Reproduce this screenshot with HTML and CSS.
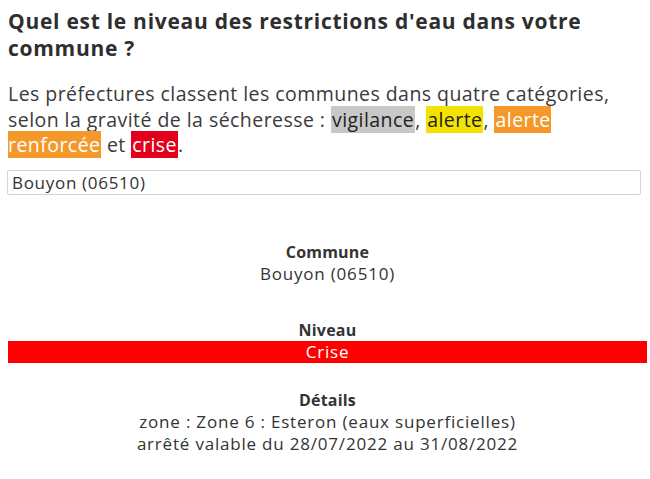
FILE: index.html
```html
<!DOCTYPE html>
<html lang="fr">
<head>
<meta charset="utf-8">
<title>Restrictions d'eau</title>
<link rel="stylesheet" href="styles.css">
</head>
<body>
<main class="page">
  <h2 class="title">Quel est le niveau des restrictions d'eau dans votre commune ?</h2>
  <p class="intro">Les préfectures classent les communes dans quatre catégories, selon la gravité de la sécheresse : <span class="tag tag-vigilance">vigilance</span>, <span class="tag tag-alerte">alerte</span>, <span class="tag tag-renforcee">alerte renforcée</span> et <span class="tag tag-crise">crise</span>.</p>
  <input class="search" type="text" value="Bouyon (06510)">
  <section class="result">
    <div class="field field-commune">
      <div class="label">Commune</div>
      <div class="value">Bouyon (06510)</div>
    </div>
    <div class="field field-niveau">
      <div class="label">Niveau</div>
      <div class="value level level-crise">Crise</div>
    </div>
    <div class="field field-details">
      <div class="label">Détails</div>
      <div class="value">zone : Zone 6 : Esteron (eaux superficielles)</div>
      <div class="value">arrêté valable du 28/07/2022 au 31/08/2022</div>
    </div>
  </section>
</main>
</body>
</html>
```

FILE: styles.css
```css
html, body {
  margin: 0;
  padding: 0;
  background: #ffffff;
}

body {
  font-family: "Open Sans", "Liberation Sans", sans-serif;
  color: #333333;
}

.page {
  padding: 8px 3px 8px 8px;
}

.title {
  margin: 0 0 19px 0;
  font-size: 21px;
  line-height: 27px;
  font-weight: 700;
  letter-spacing: 0.72px;
  color: #2e2e2e;
}

.intro {
  margin: 0 0 12px 0;
  font-size: 19.5px;
  line-height: 25.5px;
  letter-spacing: 0.45px;
  color: #3a3a3a;
}

.tag {
  padding: 0 1px;
}

.tag-vigilance {
  background: #c8c8c8;
  color: #222222;
}

.tag-alerte {
  background: #f2e400;
  color: #222222;
}

.tag-renforcee {
  background: #f4982a;
  color: #ffffff;
}

.tag-crise {
  background: #e2001a;
  color: #ffffff;
}

.search {
  display: block;
  box-sizing: border-box;
  width: calc(100% - 5px);
  height: 25px;
  margin: 0 0 0 -1px;
  padding: 0 4px;
  border: 1px solid #d4d4d4;
  border-radius: 2px;
  font-family: inherit;
  font-size: 17px;
  letter-spacing: 0.7px;
  color: #333333;
  background: #ffffff;
}

.result {
  display: flex;
  flex-direction: column;
  text-align: center;
  padding-top: 46px;
}

.field {
  display: flex;
  flex-direction: column;
}

.field-niveau {
  margin-top: 34px;
}

.field-details {
  margin-top: 26px;
}

.label {
  font-size: 16px;
  line-height: 22px;
  font-weight: 700;
  letter-spacing: 0.2px;
  color: #333333;
}

.value {
  font-size: 17px;
  line-height: 22px;
  letter-spacing: 0.8px;
  color: #333333;
}

.level {
  height: 22px;
}

.level-crise {
  background: #fe0000;
  color: #ffffff;
}
```
